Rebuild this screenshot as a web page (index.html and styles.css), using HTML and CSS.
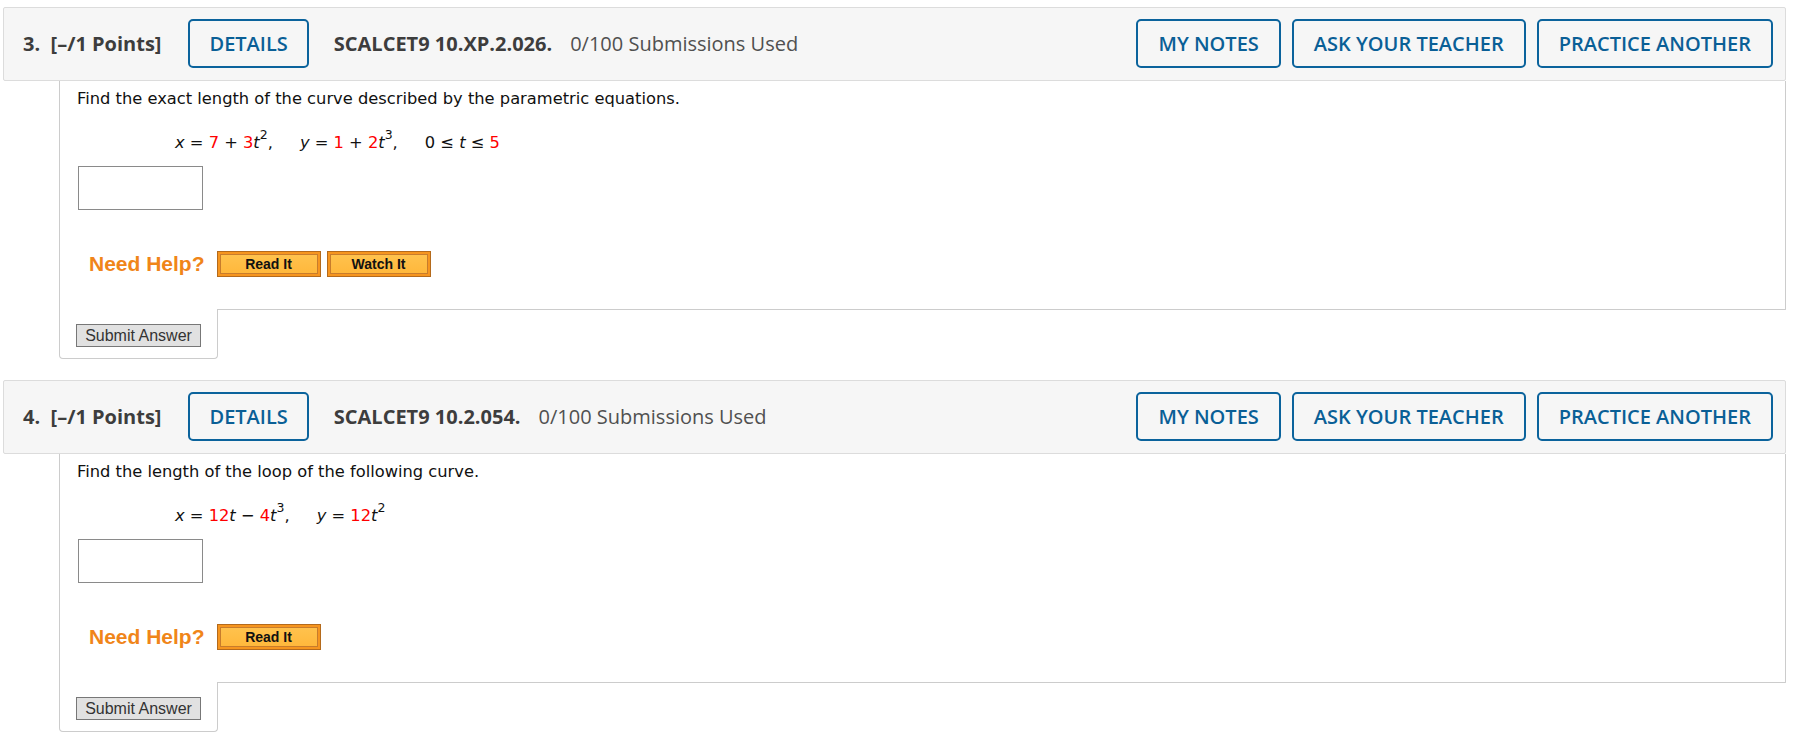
FILE: index.html
```html
<!DOCTYPE html>
<html lang="en">
<head>
<meta charset="utf-8">
<title>Questions</title>
<link rel="stylesheet" href="styles.css">
</head>
<body>
<div class="page">
  <section class="q">
    <div class="qhead">
      <span class="qnum">3.&nbsp; [–/1 Points]</span>
      <button class="btn details">DETAILS</button>
      <span class="qid">SCALCET9 10.XP.2.026.</span>
      <span class="subs">0/100 Submissions Used</span>
      <div class="actions">
        <button class="btn">MY NOTES</button>
        <button class="btn">ASK YOUR TEACHER</button>
        <button class="btn">PRACTICE ANOTHER</button>
      </div>
    </div>
    <div class="qbody">
      <p class="prompt">Find the exact length of the curve described by the parametric equations.</p>
      <p class="eq"><i>x</i> = <span class="r">7</span> + <span class="r">3</span><i>t</i><sup>2</sup>,<span class="sp"></span><i>y</i> = <span class="r">1</span> + <span class="r">2</span><i>t</i><sup>3</sup>,<span class="sp"></span>0 ≤ <i>t</i> ≤ <span class="r">5</span></p>
      <input class="answer" type="text">
      <div class="help">
        <span class="need">Need Help?</span>
        <button class="hbtn"><span>Read It</span></button>
        <button class="hbtn"><span>Watch It</span></button>
      </div>
    </div>
    <div class="qfoot">
      <div class="tab"><button class="submit">Submit Answer</button></div>
      <div class="fill"></div>
    </div>
  </section>

  <section class="q">
    <div class="qhead">
      <span class="qnum">4.&nbsp; [–/1 Points]</span>
      <button class="btn details">DETAILS</button>
      <span class="qid">SCALCET9 10.2.054.</span>
      <span class="subs">0/100 Submissions Used</span>
      <div class="actions">
        <button class="btn">MY NOTES</button>
        <button class="btn">ASK YOUR TEACHER</button>
        <button class="btn">PRACTICE ANOTHER</button>
      </div>
    </div>
    <div class="qbody">
      <p class="prompt">Find the length of the loop of the following curve.</p>
      <p class="eq"><i>x</i> = <span class="r">12</span><i>t</i> − <span class="r">4</span><i>t</i><sup>3</sup>,<span class="sp"></span><i>y</i> = <span class="r">12</span><i>t</i><sup>2</sup></p>
      <input class="answer" type="text">
      <div class="help">
        <span class="need">Need Help?</span>
        <button class="hbtn"><span>Read It</span></button>
      </div>
    </div>
    <div class="qfoot">
      <div class="tab"><button class="submit">Submit Answer</button></div>
      <div class="fill"></div>
    </div>
  </section>
</div>
</body>
</html>
```
FILE: styles.css
```css
html, body {
  margin: 0;
  padding: 0;
  background: #ffffff;
}

.page {
  margin: 7px 21px 0 3px;
}

.q {
  margin-bottom: 21px;
}

.qhead {
  display: flex;
  align-items: center;
  background: #f6f6f6;
  border: 1px solid #dcdcdc;
  border-radius: 2px;
  padding: 11px 12px 12px 19px;
  font-family: "Open Sans", "Noto Sans", sans-serif;
  font-size: 20px;
  color: #3d3d3d;
}

.qnum {
  font-weight: 700;
  margin-right: 27px;
}

.qid {
  font-weight: 700;
  margin-left: 25px;
  margin-right: 18px;
}

.subs {
  color: #505050;
}

.btn {
  font-family: "Open Sans", "Noto Sans", sans-serif;
  font-size: 20px;
  font-weight: 600;
  color: #0a5f96;
  background: transparent;
  border: 2px solid #0b639c;
  border-radius: 5px;
  height: 49px;
  padding: 0 20px;
  line-height: 1;
}

.details {
  padding: 0 19px;
}

.actions {
  margin-left: auto;
  display: flex;
  gap: 11px;
}

.qbody {
  margin-left: 56px;
  border-left: 1px solid #cccccc;
  border-right: 1px solid #cccccc;
  padding: 8px 17px 32px 17px;
  font-family: "DejaVu Sans", Verdana, sans-serif;
  font-size: 16.3px;
  color: #111;
}

.prompt {
  margin: 0;
  line-height: 20px;
}

.eq {
  margin: 24px 0 0 98px;
  line-height: 20px;
}

.eq i {
  font-style: italic;
}

.eq sup {
  font-size: 12.5px;
  line-height: 0;
  vertical-align: 9px;
}

.r {
  color: #ff0000;
}

.sp {
  display: inline-block;
  width: 27px;
}

.answer {
  display: block;
  margin: 13px 0 0 1px;
  width: 125px;
  height: 44px;
  box-sizing: border-box;
  border: 1px solid #8a8a8a;
  background: #fff;
  padding: 0;
}

.help {
  display: flex;
  align-items: center;
  height: 26px;
  margin-top: 41px;
  margin-left: 12px;
}

.need {
  font-family: "Liberation Sans", Arial, sans-serif;
  font-weight: 700;
  font-size: 21px;
  color: #f08519;
  margin-right: 12px;
}

.hbtn {
  width: 104px;
  height: 26px;
  margin-right: 6px;
  padding: 2px;
  border: 1px solid #b46a1c;
  background: #f6951f;
  box-sizing: border-box;
  display: flex;
}

.hbtn span {
  flex: 1;
  display: flex;
  align-items: center;
  justify-content: center;
  border: 1px solid #c87c2c;
  background: linear-gradient(#ffc24d, #ffb83c);
  font-family: "Liberation Sans", Arial, sans-serif;
  font-weight: 700;
  font-size: 14px;
  color: #111;
}

.qfoot {
  display: flex;
  margin-left: 56px;
}

.tab {
  box-sizing: border-box;
  width: 159px;
  border-left: 1px solid #cccccc;
  border-right: 1px solid #cccccc;
  border-bottom: 1px solid #cccccc;
  border-radius: 0 0 4px 4px;
  padding: 15px 0 11px 16px;
}

.fill {
  flex: 1;
  height: 0;
  border-top: 1px solid #cccccc;
  border-right: 1px solid #cccccc;
  border-bottom-right-radius: 4px;
}

.submit {
  font-family: "Liberation Sans", Arial, sans-serif;
  font-size: 16px;
  color: #333;
  background: #e1e1e1;
  border: 1px solid #777;
  border-radius: 0;
  width: 125px;
  height: 23px;
  padding: 0;
}
```
